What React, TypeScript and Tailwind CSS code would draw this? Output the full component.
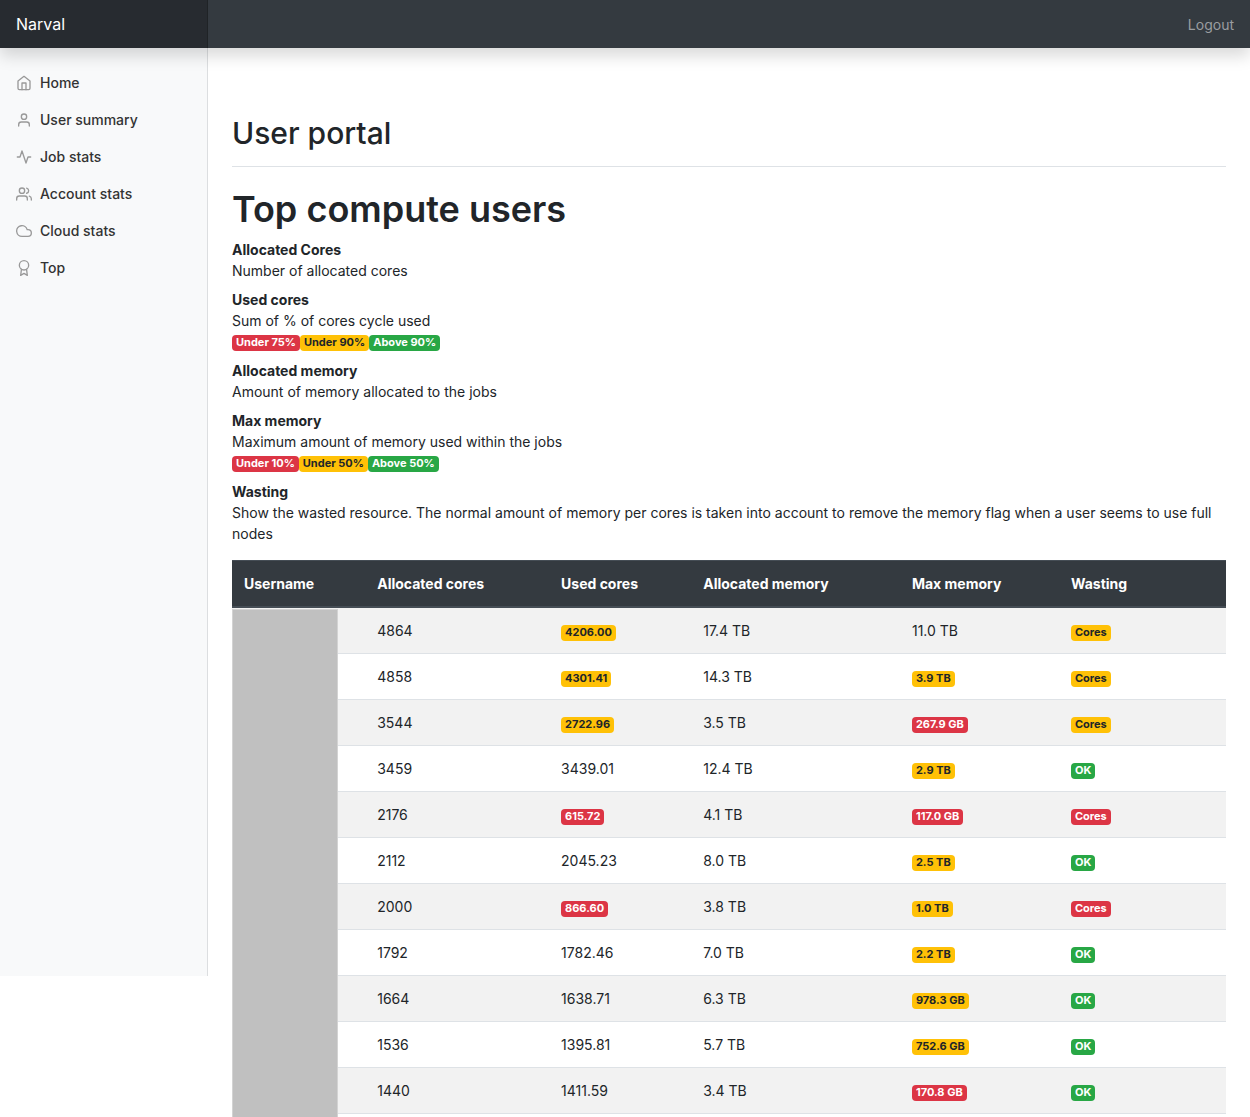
import { FiActivity, FiAward, FiCloud, FiHome, FiUser, FiUsers } from "react-icons/fi";

type Tone = "red" | "yellow" | "green";
type Cell = { text: string; tone?: Tone };

const tones: Record<Tone, string> = {
  red: "bg-[#dc3545] text-white",
  yellow: "bg-[#ffc107] text-[#212529]",
  green: "bg-[#28a745] text-white",
};

const nav = [
  { label: "Home", Icon: FiHome },
  { label: "User summary", Icon: FiUser },
  { label: "Job stats", Icon: FiActivity },
  { label: "Account stats", Icon: FiUsers },
  { label: "Cloud stats", Icon: FiCloud },
  { label: "Top", Icon: FiAward },
];

const terms: { term: string; text: string; badges?: Cell[] }[] = [
  { term: "Allocated Cores", text: "Number of allocated cores" },
  {
    term: "Used cores",
    text: "Sum of % of cores cycle used",
    badges: [
      { text: "Under 75%", tone: "red" },
      { text: "Under 90%", tone: "yellow" },
      { text: "Above 90%", tone: "green" },
    ],
  },
  { term: "Allocated memory", text: "Amount of memory allocated to the jobs" },
  {
    term: "Max memory",
    text: "Maximum amount of memory used within the jobs",
    badges: [
      { text: "Under 10%", tone: "red" },
      { text: "Under 50%", tone: "yellow" },
      { text: "Above 50%", tone: "green" },
    ],
  },
  {
    term: "Wasting",
    text: "Show the wasted resource. The normal amount of memory per cores is taken into account to remove the memory flag when a user seems to use full nodes",
  },
];

const y = (text: string): Cell => ({ text, tone: "yellow" });
const r = (text: string): Cell => ({ text, tone: "red" });
const g = (text: string): Cell => ({ text, tone: "green" });
const p = (text: string): Cell => ({ text });

const rows: Cell[][] = [
  [p("4864"), y("4206.00"), p("17.4 TB"), p("11.0 TB"), y("Cores")],
  [p("4858"), y("4301.41"), p("14.3 TB"), y("3.9 TB"), y("Cores")],
  [p("3544"), y("2722.96"), p("3.5 TB"), r("267.9 GB"), y("Cores")],
  [p("3459"), p("3439.01"), p("12.4 TB"), y("2.9 TB"), g("OK")],
  [p("2176"), r("615.72"), p("4.1 TB"), r("117.0 GB"), r("Cores")],
  [p("2112"), p("2045.23"), p("8.0 TB"), y("2.5 TB"), g("OK")],
  [p("2000"), r("866.60"), p("3.8 TB"), y("1.0 TB"), r("Cores")],
  [p("1792"), p("1782.46"), p("7.0 TB"), y("2.2 TB"), g("OK")],
  [p("1664"), p("1638.71"), p("6.3 TB"), y("978.3 GB"), g("OK")],
  [p("1536"), p("1395.81"), p("5.7 TB"), y("752.6 GB"), g("OK")],
  [p("1440"), p("1411.59"), p("3.4 TB"), r("170.8 GB"), g("OK")],
  [p(""), p(""), p(""), p(""), p("")],
];

const columns = [
  { name: "Username", width: "w-[13.4%]" },
  { name: "Allocated cores", width: "w-[18.5%]" },
  { name: "Used cores", width: "w-[14.3%]" },
  { name: "Allocated memory", width: "w-[21%]" },
  { name: "Max memory", width: "w-[16%]" },
  { name: "Wasting", width: "w-[16.8%]" },
];

function Badge({ text, tone }: { text: string; tone: Tone }) {
  return (
    <span className={`inline-block rounded px-1 pt-[2px] pb-[3px] align-baseline text-[11px] leading-[11px] font-bold whitespace-nowrap ${tones[tone]}`}>
      {text}
    </span>
  );
}

export default function App() {
  return (
    <div className="flex h-screen flex-col overflow-hidden bg-white font-['Inter','Liberation_Sans',sans-serif] text-sm leading-[21px] text-[#212529]">
      <header className="z-10 flex h-12 shrink-0 items-stretch justify-between bg-[#343a40] shadow-[0_8px_16px_rgba(0,0,0,0.15)]">
        <a href="#" className="flex w-52 items-center border-r border-[#1f2326] bg-[#272b30] px-4 text-base text-white">
          Narval
        </a>
        <a href="#logout" className="flex items-center px-4 text-[#9a9da0]">
          Logout
        </a>
      </header>

      <div className="flex items-start">
        <nav className="h-[928px] w-52 shrink-0 border-r border-[#dcdee0] bg-[#f8f9fa] pt-4">
          <ul>
            {nav.map(({ label, Icon }) => (
              <li key={label}>
                <a href="#" className="flex items-center gap-2 px-4 py-2 font-medium text-[#333]">
                  <Icon className="size-4 text-[#999]" />
                  {label}
                </a>
              </li>
            ))}
          </ul>
        </nav>

        <main className="min-w-0 flex-1 px-6 pt-16">
          <div className="mb-4 border-b border-[#dee2e6] pb-3">
            <h2 className="text-[30px] leading-[42px] font-medium">User portal</h2>
          </div>
          <h1 className="mb-1 text-[36px] leading-[52px] font-semibold">Top compute users</h1>

          <dl className="mb-4">
            {terms.map(({ term, text, badges }) => (
              <div key={term} className="mb-2">
                <dt className="font-bold">{term}</dt>
                <dd>{text}</dd>
                {badges && (
                  <dd className="flex h-[21px] items-end pb-px">
                    {badges.map((b) => (
                      <Badge key={b.text} text={b.text} tone={b.tone!} />
                    ))}
                  </dd>
                )}
              </div>
            ))}
          </dl>

          <div className="relative">
            <table className="w-full table-fixed border-collapse">
              <thead>
                <tr className="bg-[#343a40] text-left text-white">
                  {columns.map((c) => (
                    <th key={c.name} className={`border-t border-b-2 border-[#454d55] p-3 font-bold ${c.width}`}>
                      {c.name}
                    </th>
                  ))}
                </tr>
              </thead>
              <tbody>
                {rows.map((row, i) => (
                  <tr key={i} className="h-[46px] odd:bg-[#f2f2f2]">
                    <td className="border-t border-[#dee2e6] p-3" />
                    {row.map((c, j) => (
                      <td key={j} className="border-t border-[#dee2e6] p-3">
                        {c.tone ? <Badge text={c.text} tone={c.tone} /> : c.text}
                      </td>
                    ))}
                  </tr>
                ))}
              </tbody>
            </table>
            <div className="absolute top-[49px] bottom-0 left-0 w-[106px] border border-[#d3d3d3] bg-[#c0c0c0]" />
          </div>
        </main>
      </div>
    </div>
  );
}
